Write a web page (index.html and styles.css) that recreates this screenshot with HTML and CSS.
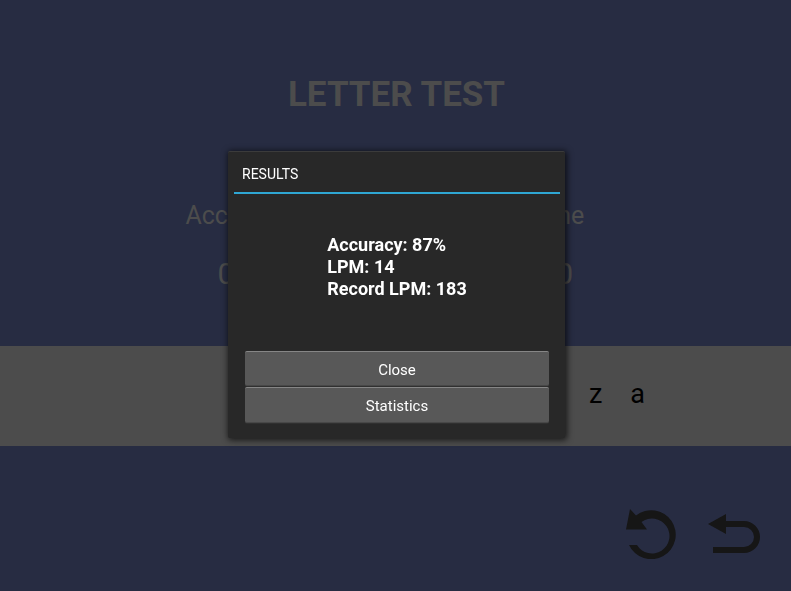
FILE: index.html
```html
<!DOCTYPE html>
<html lang="en">
<head>
<meta charset="utf-8">
<title>Letter Test</title>
<link rel="stylesheet" href="styles.css">
</head>
<body>
<main class="screen">
  <h1 class="title">LETTER TEST</h1>
  <section class="stats">
    <div class="stat"><span class="stat-label">Accuracy</span><span class="stat-value">0%</span></div>
    <div class="stat"><span class="stat-label">Time</span><span class="stat-value">00</span></div>
  </section>
  <section class="strip"><span>z</span><span>a</span></section>
  <nav class="tools">
    <button class="tool" type="button" aria-label="Restart">
      <svg width="52" height="52" viewBox="0 0 52 52"><path d="M5 38A24.500 24.500 0 1 0 12 8.500L6 2L2 22.500H23L17.500 15A17.500 17.500 0 1 1 13 38Z"/></svg>
    </button>
    <button class="tool" type="button" aria-label="Back">
      <svg width="54" height="52" viewBox="0 0 54 52"><path d="M0 17L18 7V14H36A16 16 0 0 1 36 46H5V40H36A10 10 0 0 0 36 20H18V27Z"/></svg>
    </button>
  </nav>
</main>
<div class="overlay">
  <section class="dialog" role="dialog" aria-labelledby="dialog-title">
    <h2 class="dialog-title" id="dialog-title">RESULTS</h2>
    <div class="results">
      <p>Accuracy: 87%<br>LPM: 14<br>Record LPM: 183</p>
    </div>
    <div class="actions">
      <button class="action" type="button">Close</button>
      <button class="action" type="button">Statistics</button>
    </div>
  </section>
</div>
</body>
</html>
```
FILE: styles.css
```css
* { box-sizing: border-box; }

body {
  margin: 0;
  background: #272c42;
  color: #4c4c4c;
  font-family: Roboto, "Liberation Sans", sans-serif;
}

.screen {
  display: flex;
  flex-direction: column;
  min-height: 100vh;
}

.title {
  margin: 73px 0 0;
  padding-left: 2px;
  font-size: 35px;
  line-height: 44px;
  text-align: center;
}

.stats {
  display: grid;
  grid-template-columns: 1fr 1fr;
  width: 81%;
  margin: 84px auto 0;
  padding-left: 2px;
}

.stat {
  display: flex;
  flex-direction: column;
  align-items: center;
  gap: 27px;
}

.stat-label {
  font-size: 25px;
  line-height: 30px;
}

.stat-value {
  font-size: 30px;
  line-height: 32px;
}

.strip {
  display: flex;
  align-items: center;
  justify-content: flex-end;
  gap: 28px;
  height: 100px;
  margin-top: 56px;
  padding: 0 146px 4px 0;
  background: #4c4c4c;
  color: #000;
  font-size: 27px;
}

.tools {
  display: flex;
  justify-content: flex-end;
  gap: 32px;
  margin-top: auto;
  padding: 0 29px 32px 0;
}

.tool {
  display: flex;
  padding: 0;
  border: 0;
  background: none;
}

.tool svg { fill: #161616; }

.overlay {
  position: fixed;
  inset: 0;
  display: flex;
  align-items: center;
  justify-content: center;
  padding: 0 0 2px 2px;
}

.dialog {
  width: 337px;
  padding: 6px 5px 15px 6px;
  border-top: 1px solid #3b3b3b;
  border-radius: 2px;
  background: #282828;
  color: #fff;
  box-shadow: 1px 1px 6px 1px rgba(0, 0, 0, 0.7);
}

.dialog-title {
  margin: 0;
  padding: 6px 8px 8px;
  border-bottom: 2px solid #2fa7d4;
  font-size: 14px;
  font-weight: 400;
  line-height: 20px;
}

.results {
  display: flex;
  justify-content: center;
  padding: 40px 0 51px;
  font-size: 18px;
  font-weight: 700;
  line-height: 22px;
}

.results p { margin: 0; }

.actions {
  display: flex;
  flex-direction: column;
  gap: 1px;
  padding: 0 11px;
}

.action {
  height: 35px;
  padding: 2px 0 0;
  border: 0;
  border-top: 1px solid #868686;
  border-bottom: 1px solid #484848;
  border-radius: 2px;
  background: #585858;
  color: #fff;
  font-family: inherit;
  font-size: 15px;
  box-shadow: 0 1px 0 #303030;
}

.action:last-child { height: 36px; }
```
